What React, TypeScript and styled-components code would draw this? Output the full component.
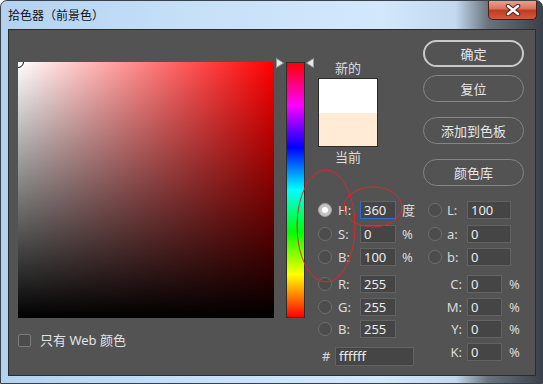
import React from 'react';
import styled, { createGlobalStyle } from 'styled-components';

const GlobalStyle = createGlobalStyle`
  html, body {
    margin: 0;
    padding: 0;
    background: #ffffff;
  }
  body {
    font-family: "Noto Sans", "Noto Sans CJK SC", sans-serif;
  }
  * {
    box-sizing: border-box;
  }
`;

const Window = styled.div`
  position: relative;
  width: 543px;
  height: 384px;
  display: flex;
  flex-direction: column;
  border: 1px solid #39424c;
  border-radius: 7px 7px 0 0;
  background: linear-gradient(
    to right,
    #b3d2f0 0%,
    #c6e0f8 35%,
    #d3e8fb 70%,
    #c2d9ee 84%,
    #6a747e 90%,
    #3b4149 100%
  );
  overflow: hidden;
`;

const TitleBar = styled.div`
  height: 28px;
  display: flex;
  align-items: flex-start;
  padding-left: 7px;
`;

const Title = styled.div`
  margin-top: 7px;
  font-size: 12px;
  line-height: 14px;
  color: #111;
  font-family: "Noto Sans CJK SC", sans-serif;
`;

const CloseButton = styled.div`
  margin-left: auto;
  margin-right: 5px;
  margin-top: -1px;
  width: 49px;
  height: 20px;
  border: 1px solid #4d1d14;
  border-top: none;
  border-radius: 0 0 5px 5px;
  background: linear-gradient(to bottom, #e9a794 0%, #d8745e 45%, #c23b21 55%, #d45a3c 100%);
  display: flex;
  align-items: center;
  justify-content: center;
`;

const Client = styled.div`
  flex: 1;
  margin: 0 6px 7px 7px;
  background: #535353;
  border: 1px solid #2c2c2c;
  display: flex;
  padding: 10px 0 0 9px;
  color: #dadada;
  font-size: 13px;
`;

const LeftCol = styled.div`
  display: flex;
  flex-direction: column;
  padding-top: 22px;
`;

const ColorField = styled.div`
  position: relative;
  width: 256px;
  height: 256px;
  overflow: hidden;
  background: linear-gradient(to top, #000 0%, rgba(0, 0, 0, 0) 100%),
    linear-gradient(to right, #fff 0%, #f00 100%);
`;

const FieldMarker = styled.div`
  position: absolute;
  left: -6px;
  top: -6px;
  width: 12px;
  height: 12px;
  border-radius: 50%;
  border: 1.5px solid #111;
`;

const WebOnlyRow = styled.label`
  display: flex;
  align-items: center;
  gap: 9px;
  margin-top: 14px;
  font-size: 13px;
  line-height: 16px;
  color: #e2e2e2;
`;

const CheckBox = styled.span`
  width: 13px;
  height: 13px;
  border: 1px solid #7c7c7c;
  border-radius: 2px;
  background: #4b4b4b;
`;

const HueWrap = styled.div`
  position: relative;
  margin-left: 2px;
  width: 37px;
  padding-top: 22px;
`;

const HueBar = styled.div`
  margin-left: 10px;
  width: 19px;
  height: 256px;
  border: 1px solid #2d2d2d;
  background: linear-gradient(
    to bottom,
    #ff0000 0%,
    #ff00ff 16.6%,
    #0000ff 33.3%,
    #00ffff 50%,
    #00ff00 66.6%,
    #ffff00 83.3%,
    #ff0000 100%
  );
`;

const Arrow = styled.svg<{ $left: number }>`
  position: absolute;
  top: 18px;
  left: ${(p) => p.$left}px;
`;

const RightArea = styled.div`
  margin-left: 5px;
  display: flex;
  flex-direction: column;
`;

const TopRow = styled.div`
  display: flex;
`;

const SwatchGroup = styled.div`
  width: 60px;
  display: flex;
  flex-direction: column;
  align-items: center;
  padding-top: 20px;
  font-family: "Noto Sans CJK SC", sans-serif;
  font-size: 13px;
  line-height: 16px;
  color: #dcdcdc;
`;

const Swatch = styled.div`
  margin: 2px 0;
  width: 60px;
  height: 69px;
  border: 1px solid #2b2b2b;
  display: flex;
  flex-direction: column;
`;

const SwatchHalf = styled.div<{ $color: string }>`
  flex: 1;
  background: ${(p) => p.$color};
`;

const ButtonCol = styled.div`
  margin-left: 45px;
  width: 101px;
  display: flex;
  flex-direction: column;
`;

const DialogButton = styled.div<{ $primary?: boolean; $mt: number }>`
  margin-top: ${(p) => p.$mt}px;
  height: 27px;
  border-radius: 14px;
  border: ${(p) => (p.$primary ? '2px solid #c9c9c9' : '1px solid #858585')};
  display: flex;
  align-items: center;
  justify-content: center;
  font-family: "Noto Sans CJK SC", sans-serif;
  font-size: 13px;
  color: #e6e6e6;
`;

const Fields = styled.div`
  margin-top: 15px;
  display: flex;
`;

const FieldCol = styled.div<{ $width?: number }>`
  display: flex;
  flex-direction: column;
  width: ${(p) => (p.$width ? `${p.$width}px` : 'auto')};
`;

const FieldRow = styled.div<{ $mt: number }>`
  margin-top: ${(p) => p.$mt}px;
  display: flex;
  align-items: center;
  height: 18px;
`;

const RadioSlot = styled.div<{ $w: number }>`
  width: ${(p) => p.$w}px;
  display: flex;
  align-items: center;
`;

const Radio = styled.span<{ $on?: boolean }>`
  position: relative;
  width: 14px;
  height: 14px;
  border-radius: 50%;
  border: 1px solid ${(p) => (p.$on ? '#9c9c9c' : '#6e6e6e')};
  background: ${(p) => (p.$on ? '#c4c4c4' : '#4c4c4c')};

  &::after {
    content: '';
    display: ${(p) => (p.$on ? 'block' : 'none')};
    position: absolute;
    left: 3px;
    top: 3px;
    width: 6px;
    height: 6px;
    border-radius: 50%;
    background: #ffffff;
  }
`;

const FieldLabel = styled.span<{ $w: number; $right?: boolean }>`
  width: ${(p) => p.$w}px;
  text-align: ${(p) => (p.$right ? 'right' : 'left')};
  padding-right: ${(p) => (p.$right ? 5 : 0)}px;
  font-size: 13px;
  line-height: 16px;
  color: #dadada;
`;

const ValueBox = styled.input<{ $w: number; $focus?: boolean; $h?: number }>`
  width: ${(p) => p.$w}px;
  height: ${(p) => p.$h ?? 18}px;
  padding: 0 0 0 3px;
  margin: 0;
  border: 1px solid ${(p) => (p.$focus ? '#2c6cd2' : '#626262')};
  background: #454545;
  color: #ebebeb;
  font: 13px/16px "Noto Sans", sans-serif;
  outline: none;
`;

const Unit = styled.span<{ $w: number; $pl: number }>`
  width: ${(p) => p.$w}px;
  padding-left: ${(p) => p.$pl}px;
  font-family: "Noto Sans", "Noto Sans CJK SC", sans-serif;
  font-size: 13px;
  line-height: 16px;
  color: #dadada;
`;

const Annotations = styled.svg`
  position: absolute;
  left: -1px;
  top: -1px;
  pointer-events: none;
`;

type LeftField = { label: string; value: string; unit: string; mt: number; on?: boolean; focus?: boolean };

const hsb: LeftField[] = [
  { label: 'H:', value: '360', unit: '度', mt: 0, on: true, focus: true },
  { label: 'S:', value: '0', unit: '%', mt: 6 },
  { label: 'B:', value: '100', unit: '%', mt: 5 },
];

const rgb: LeftField[] = [
  { label: 'R:', value: '255', unit: '', mt: 9 },
  { label: 'G:', value: '255', unit: '', mt: 5 },
  { label: 'B:', value: '255', unit: '', mt: 4 },
];

const lab = [
  { label: 'L:', value: '100', mt: 0 },
  { label: 'a:', value: '0', mt: 6 },
  { label: 'b:', value: '0', mt: 5 },
];

const cmyk = [
  { label: 'C:', mt: 9 },
  { label: 'M:', mt: 5 },
  { label: 'Y:', mt: 4 },
  { label: 'K:', mt: 5 },
];

const SliderArrow = ({ left, dir }: { left: number; dir: 'right' | 'left' }) => (
  <Arrow $left={left} width="8" height="10" viewBox="0 0 8 10">
    <path
      d={dir === 'right' ? 'M0.5 0.5 L7.5 5 L0.5 9.5 Z' : 'M7.5 0.5 L0.5 5 L7.5 9.5 Z'}
      fill="#e8e8e8"
      stroke="#9a9a9a"
      strokeWidth="1"
    />
  </Arrow>
);

const App = () => {
  return (
    <>
      <GlobalStyle />
      <Window>
        <TitleBar>
          <Title>拾色器（前景色）</Title>
          <CloseButton>
            <svg width="16" height="12" viewBox="0 0 16 12">
              <path d="M3 2 L13 10 M13 2 L3 10" stroke="#4a2a24" strokeWidth="4.5" strokeLinecap="round" />
              <path d="M3 2 L13 10 M13 2 L3 10" stroke="#ffffff" strokeWidth="2.4" strokeLinecap="round" />
            </svg>
          </CloseButton>
        </TitleBar>

        <Client>
          <LeftCol>
            <ColorField>
              <FieldMarker />
            </ColorField>
            <WebOnlyRow>
              <CheckBox />
              <span>只有 Web 颜色</span>
            </WebOnlyRow>
          </LeftCol>

          <HueWrap>
            <SliderArrow left={0} dir="right" />
            <HueBar />
            <SliderArrow left={30} dir="left" />
          </HueWrap>

          <RightArea>
            <TopRow>
              <SwatchGroup>
                <span>新的</span>
                <Swatch>
                  <SwatchHalf $color="#ffffff" />
                  <SwatchHalf $color="#ffebd6" />
                </Swatch>
                <span>当前</span>
              </SwatchGroup>
              <ButtonCol>
                <DialogButton $primary $mt={0}>确定</DialogButton>
                <DialogButton $mt={8}>复位</DialogButton>
                <DialogButton $mt={15}>添加到色板</DialogButton>
                <DialogButton $mt={15}>颜色库</DialogButton>
              </ButtonCol>
            </TopRow>

            <Fields>
              <FieldCol $width={110}>
                {[...hsb, ...rgb].map((f, i) => (
                  <FieldRow key={i} $mt={f.mt}>
                    <RadioSlot $w={20}>
                      <Radio $on={f.on} />
                    </RadioSlot>
                    <FieldLabel $w={22}>{f.label}</FieldLabel>
                    <ValueBox $w={36} $focus={f.focus} readOnly defaultValue={f.value} />
                    <Unit $w={32} $pl={6}>{f.unit}</Unit>
                  </FieldRow>
                ))}
                <FieldRow $mt={9}>
                  <Unit $w={17} $pl={4}>#</Unit>
                  <ValueBox $w={79} $h={19} readOnly defaultValue="ffffff" />
                </FieldRow>
              </FieldCol>

              <FieldCol>
                {lab.map((f) => (
                  <FieldRow key={f.label} $mt={f.mt}>
                    <RadioSlot $w={19}>
                      <Radio />
                    </RadioSlot>
                    <FieldLabel $w={20}>{f.label}</FieldLabel>
                    <ValueBox $w={44} readOnly defaultValue={f.value} />
                  </FieldRow>
                ))}
                {cmyk.map((f) => (
                  <FieldRow key={f.label} $mt={f.mt}>
                    <FieldLabel $w={39} $right>{f.label}</FieldLabel>
                    <ValueBox $w={35} readOnly defaultValue="0" />
                    <Unit $w={20} $pl={7}>%</Unit>
                  </FieldRow>
                ))}
              </FieldCol>
            </Fields>
          </RightArea>
        </Client>

        <Annotations width="543" height="384" viewBox="0 0 543 384">
          <ellipse cx="326" cy="226" rx="29" ry="56" fill="none" stroke="#e0262b" strokeWidth="1" />
          <ellipse cx="373" cy="207" rx="29" ry="20" fill="none" stroke="#e0262b" strokeWidth="1" />
        </Annotations>
      </Window>
    </>
  );
};

export default App;
